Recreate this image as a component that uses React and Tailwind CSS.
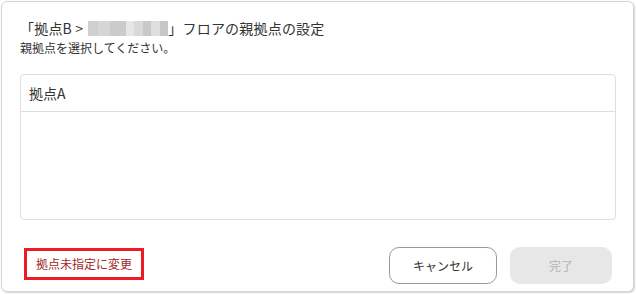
export default function App() {
  return (
    <div
      className="w-[636px] h-[294px] bg-white pt-px pl-px"
      style={{ fontFamily: '"Noto Sans CJK JP", "Noto Sans", sans-serif' }}
    >
      <div className="w-[633px] h-[291px] bg-white border border-[#d4d4d4] rounded-md shadow-[1px_1px_2px_rgba(0,0,0,0.18)] pt-[16px] pl-[18px] pr-[17px]">
        {/* header */}
        <div className="flex items-center text-[14px] leading-5 text-[#333] tracking-[0.2px]">
          <span>「拠点B &gt;</span>
          <span className="ml-[5px] flex h-[15px] w-[80px]">
            <span className="w-[10px] bg-[#cfcfcf]" />
            <span className="w-[12px] bg-[#d6d6d6]" />
            <span className="w-[16px] bg-[#cbcbcb]" />
            <span className="w-[8px] bg-[#e6e6e6]" />
            <span className="w-[9px] bg-[#d9d9d9]" />
            <span className="w-[8px] bg-[#c9c9c9]" />
            <span className="w-[9px] bg-[#dedede]" />
            <span className="w-[8px] bg-[#c6c6c6]" />
          </span>
          <span>」フロアの親拠点の設定</span>
        </div>
        <p className="text-[12px] leading-[18px] text-[#333] mt-px">親拠点を選択してください。</p>

        {/* list */}
        <div className="mt-[17px] h-[146px] border border-[#dedede] rounded-[4px]">
          <div className="h-[37px] border-b border-[#dedede] flex items-center pl-[8px] text-[14px] text-[#333]">
            拠点A
          </div>
        </div>

        {/* footer */}
        <div className="mt-[27px] flex items-start justify-between pr-[4px]">
          <button className="ml-[4px] mt-px w-[120px] h-[32px] border-[3px] border-[#ec1c24] text-[12px] text-[#a02828] text-left pl-[9px]">
            拠点未指定に変更
          </button>
          <div className="flex gap-[13px]">
            <button className="w-[108px] h-[37px] rounded-[10px] border border-[#9a9a9a] bg-white text-[12px] text-[#333]">
              キャンセル
            </button>
            <button className="w-[102px] h-[37px] rounded-[10px] bg-[#e7e7e7] text-[12px] text-[#b3b3b3]">
              完了
            </button>
          </div>
        </div>
      </div>
    </div>
  );
}
